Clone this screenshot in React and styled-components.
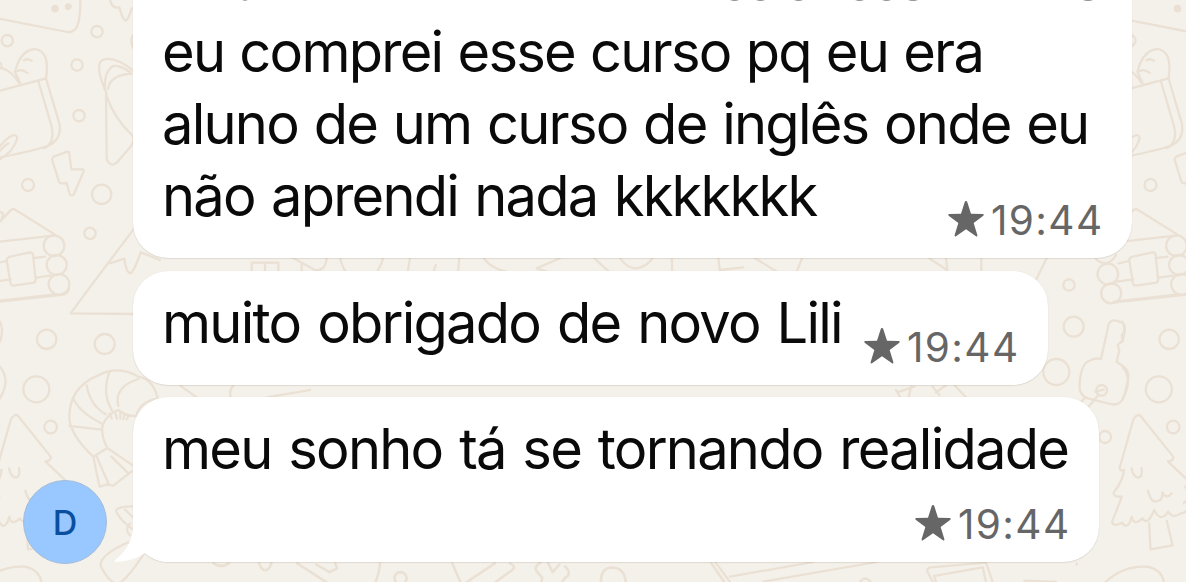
import React from 'react';
import styled, {createGlobalStyle} from 'styled-components';

const GlobalStyle = createGlobalStyle`
    body {
        margin: 0;
        background: #f4f1ea;
    }
`;

const Page = styled.div`
    position: relative;
    width: 1186px;
    height: 582px;
    overflow: hidden;
    background: #f4f1ea;
    font-family: Inter, "Liberation Sans", sans-serif;
`;

const WallpaperSvg = styled.svg`
    position: absolute;
    top: 0;
    left: 0;
    width: 1186px;
    height: 582px;
    fill: none;
    stroke: #eae0d4;
    stroke-width: 6.8;
    stroke-linecap: round;
    stroke-linejoin: round;
`;

const Chat = styled.div`
    position: relative;
    display: flex;
    align-items: flex-end;
    height: 562px;
    padding-left: 23px;
`;

const Avatar = styled.div`
    display: flex;
    align-items: center;
    justify-content: center;
    box-sizing: border-box;
    width: 84px;
    height: 84px;
    margin: 0 26px -2px 0;
    border: 1px solid #a5bcd8;
    border-radius: 50%;
    background: #98c8ff;
    color: #0a4f9f;
    font-size: 34px;
    font-weight: 500;
`;

const Messages = styled.div`
    display: flex;
    flex-direction: column;
    align-items: flex-start;
    gap: 12.5px;
`;

const Bubble = styled.div`
    position: relative;
    display: grid;
    box-sizing: border-box;
    width: ${props => props.$width}px;
    height: ${props => props.$height}px;
    padding: 16px 30px 17px 29px;
    border-radius: ${props => props.$first ? '0 0 35px 35px' : '35px'};
    background: #fff;
    box-shadow: 0 1px 1px rgba(90, 75, 50, 0.12), 0 0 1px rgba(90, 75, 50, 0.12);
`;

const Text = styled.div`
    grid-area: 1 / 1;
    color: #0a0a0a;
    font-size: 56px;
    line-height: 72px;
`;

const Line = styled.div`
    letter-spacing: -1.75px;
    word-spacing: ${props => props.$gap}px;
    white-space: nowrap;
`;

const Meta = styled.div`
    grid-area: 1 / 1;
    place-self: end;
    display: flex;
    align-items: flex-start;
    gap: 7px;
    height: 40px;
    color: #666;
`;

const Time = styled.span`
    margin-right: -1.5px;
    font-size: 40.5px;
    line-height: 40px;
    letter-spacing: 1.4px;
`;

const StarIcon = styled.svg`
    width: 36px;
    height: 36px;
    fill: currentColor;
`;

const TailSvg = styled.svg`
    position: absolute;
    left: -19px;
    bottom: 0;
    width: 60px;
    height: 60px;
    fill: #fff;
`;

const CutLine = styled.svg`
    position: absolute;
    top: 0;
    left: 0;
    width: 999px;
    height: 2px;
    fill: #999;
`;

const Star = () => (
    <StarIcon viewBox="0 0 108 108">
        <path d="M54 0Q57 0 58 4L69 38L104 39Q109 40 106 44L77 66L88 102Q89 108 84 106L54 85L24 106Q19 108 20 102L31 66L2 44Q-1 40 4 39L39 38L50 4Q51 0 54 0Z"/>
    </StarIcon>
);

// one repeat of the doodles, drawn at three times its size
const Tile = () => (
    <g transform="scale(.33333)">
        <path d="M-60 45L202 96Q229 98 236 65Q242 35 241 -5"/>
        <g fill="#eae0d4"><circle cx="165" cy="26" r="8"/><circle cx="205" cy="20" r="7"/></g>
        <circle cx="22" cy="122" r="17"/>
        <circle cx="84" cy="555" r="18"/>
        <path d="M60 248L45 216Q60 151 105 147Q151 154 138 235L0 272M72 181Q80 174 95 182M53 213Q66 205 82 219M-15 180Q5 185 5 200M-20 208L5 204Q35 213 57 248"/>
        <path d="M115 243L155 380Q166 430 132 445M138 235L178 370Q187 420 142 438Q100 453 -15 475"/>
        <path d="M-10 455Q12 415 42 405Q54 407 50 420Q38 458 -5 480M-5 457Q12 438 25 430"/>
        <path d="M161 470L202 455Q208 455 208 462L214 508L248 508Q253 510 250 516L222 582Q215 592 208 580L200 549L185 550Q178 550 176 542L156 478Z"/>
        <path d="M-45 725L-10 675L33 630Q40 625 47 630L165 704M-75 733L160 707M-5 637Q5 635 10 642L5 655"/>
        <path d="M26 771L90 757Q98 757 99 764L107 840Q106 848 98 849L40 857Q33 856 31 848L20 778ZM105 774L135 770M110 833L150 827M-12 790L20 783M-18 845L32 838"/>
        <circle cx="162" cy="737" r="31"/><circle cx="170" cy="795" r="30"/><circle cx="177" cy="853" r="31"/>
        <circle cx="-44" cy="822" r="31"/><circle cx="-34" cy="880" r="30"/>
        <g transform="translate(0 870)">
            <circle cx="140" cy="148" r="29"/><circle cx="109" cy="298" r="39"/><circle cx="152" cy="411" r="19"/>
            <path d="M-25 35L160 14M-30 38L185 15Q205 12 207 -5"/>
            <path d="M47 375Q55 375 62 388L152 500Q155 512 136 514L200 575Q211 590 188 590Q207 623 184 639M47 375Q34 380 31 394L-9 535Q-8 543 5 540Q0 575 -27 608Q-27 622 -2 620L-31 695Q-30 712 0 698Q9 717 22 698L28 680Q33 710 60 685M60 685Q75 710 95 660Q115 700 137 665Q151 688 175 670Q195 670 205 638M27 535Q32 562 48 563Q61 560 57 534M76 602Q88 645 108 632Q122 628 119 607Q132 630 147 610M80 700L84 778L150 766L133 693"/>
            <path d="M-55 590Q0 535 75 540Q120 550 125 590" transform="translate(0 290)"/>
            <path d="M0 230Q33 270 0 325M0 95Q12 120 0 155"/>
        </g>
    </g>
);

const Wallpaper = () => (
    <WallpaperSvg viewBox="0 0 1186 582">
        <Tile/>
        <g transform="translate(1122.5 0)"><Tile/></g>
        <g transform="scale(.33333)">
            <circle cx="291" cy="95" r="17"/><circle cx="231" cy="195" r="17"/><circle cx="237" cy="347" r="17"/>
            <circle cx="305" cy="583" r="29"/><circle cx="270" cy="700" r="17"/>
            <path d="M330 0Q337 28 358 22Q370 65 378 62Q386 55 395 25M400 105Q388 120 400 145"/>
            <path d="M320 282Q282 193 307 181Q340 165 400 212M315 265Q312 214 340 198Q359 194 390 216M324 267Q330 225 395 221M318 283L320 478Q332 503 350 488L385 448Q410 422 396 405Q342 355 319 286"/>
            <path d="M405 682L265 868L212 940L400 942M330 790L373 776Q378 820 393 820Q405 807 422 757L480 780"/>
        </g>
        <g transform="translate(0 290) scale(.33333)">
            <circle cx="314" cy="162" r="30"/>
            <path d="M473 325Q460 268 415 260Q355 225 295 256Q206 292 208 385Q212 437 280 500L322 474Q303 440 307 408Q322 370 355 360Q381 380 408 378Q420 335 473 325M260 286Q270 345 317 373M220 325Q236 365 304 400M208 408L304 419M328 247Q305 310 336 361M415 267Q340 292 355 348M329 370L335 385M345 366L351 386M361 366L361 386M373 376L370 387M388 375L380 388M280 500Q292 560 299 590L326 582L290 500M322 474L398 526M334 500L385 550L397 544M318 584L340 587L390 548"/>
            <path d="M398 649Q340 650 350 668Q365 695 398 718M375 659L398 681M390 700Q372 720 390 736"/>
            <path d="M385 757Q298 795 302 828Q325 875 352 883Q381 870 430 794"/>
            <path d="M540 286L590 322M700 287Q687 300 692 322M800 322L930 300"/>
        </g>
        <g transform="translate(240 250) scale(.33333)">
            <path d="M35 65V38H115V65M75 40V65M155 22L225 60Q255 65 260 25M185 40V65M300 22Q305 50 320 68M430 22Q425 45 410 68M510 22L503 68M587 45L580 68M658 22L654 68M730 22Q750 55 810 68M960 25L890 55L930 68M1060 22L1110 68M1140 24Q1160 55 1190 55Q1220 50 1238 24M1295 22L1297 68M1435 22L1440 68M1440 60L1510 52"/>
        </g>
        <g transform="translate(886 0) scale(.33333)">
            <path d="M-400 770L-320 820M-250 770L-270 820M130 775L183 810M180 775L184 810M286 775V810M482 775L450 840M628 775Q640 790 660 790Q680 785 690 765"/>
            <circle cx="549" cy="855" r="17"/>
        </g>
        <g transform="translate(886 290) scale(.33333)">
            <circle cx="563" cy="110" r="30"/><circle cx="511" cy="246" r="39"/><circle cx="657" cy="441" r="18"/>
            <path d="M668 103Q675 88 690 92L708 97Q722 107 714 126L707 137L710 151L695 165L700 181L692 216Q732 237 727 264L716 315Q704 350 673 342L605 325Q577 315 581 281Q585 224 607 214Q624 202 645 207ZM637 315L608 350M595 325L582 340M628 305L653 299"/>
            <circle cx="647" cy="301" r="16"/>
            <path d="M30 300L42 320M40 305L85 290M75 290L68 322M140 290L160 315M180 285L150 308M205 285L240 322"/>
            <path d="M140 876L123 842Q124 834 134 832L300 818L320 876M150 876L144 858L290 832L300 876M415 872L510 876M572 820L572 824"/>
        </g>
        <g transform="translate(130 555) scale(.38)">
            <path d="M220 22Q240 35 260 22M340 22Q345 40 358 40Q370 35 372 20M440 22L530 80M490 25L525 45L545 35L540 22M658 22Q655 55 642 80M848 22L873 80L960 22M1000 22Q1018 30 1005 40L950 80M1080 20Q1060 32 1072 45L1085 60L1080 80M1100 20L1112 45L1130 25M1145 30Q1165 50 1145 60L1130 80M1240 80Q1235 33 1270 33Q1305 35 1305 80M1530 22L1570 80"/>
            <circle cx="712" cy="61" r="16"/>
        </g>
        <g transform="translate(700 540) scale(.33333)">
            <path d="M45 65L90 126M90 110L340 66M190 125L530 66M480 126Q495 105 512 126"/>
        </g>
    </WallpaperSvg>
);

const Stamp = ({time}) => (
    <Meta>
        <Star/>
        <Time>{time}</Time>
    </Meta>
);

const App = () => (
    <>
        <GlobalStyle/>
        <Page>
            <Wallpaper/>
            <Chat>
                <Avatar>D</Avatar>
                <Messages>
                    <Bubble $width={999} $height={258} $first>
                        <CutLine viewBox="0 0 999 2">
                            <path d="M109 0h6l-3 1zM597 0h9l-3 1h-3zM623 0h9l-3 1h-3zM661 0h9l-3 1h-3zM722 0h9l-3 1h-3zM749 0h9l-3 1h-3zM775 0h10l-3 1h-4zM950 0h10l-3 1h-4z"/>
                        </CutLine>
                        <Text>
                            <Line $gap={1.1}>eu comprei esse curso pq eu era</Line>
                            <Line $gap={1.6}>aluno de um curso de inglês onde eu</Line>
                            <Line $gap={2.1}>não aprendi nada kkkkkkk</Line>
                        </Text>
                        <Stamp time="19:44"/>
                    </Bubble>
                    <Bubble $width={915} $height={114}>
                        <Text>
                            <Line $gap={2.8}>muito obrigado de novo Lili</Line>
                        </Text>
                        <Stamp time="19:44"/>
                    </Bubble>
                    <Bubble $width={966} $height={165}>
                        <TailSvg viewBox="0 0 60 60">
                            <path d="M19 0V24Q19 44 1 58Q0 60 3 60Q20 59 31 51Q42 60 55 60L60 60V0Z"/>
                        </TailSvg>
                        <Text>
                            <Line $gap={2.7}>meu sonho tá se tornando realidade</Line>
                        </Text>
                        <Stamp time="19:44"/>
                    </Bubble>
                </Messages>
            </Chat>
        </Page>
    </>
);

export default App;
